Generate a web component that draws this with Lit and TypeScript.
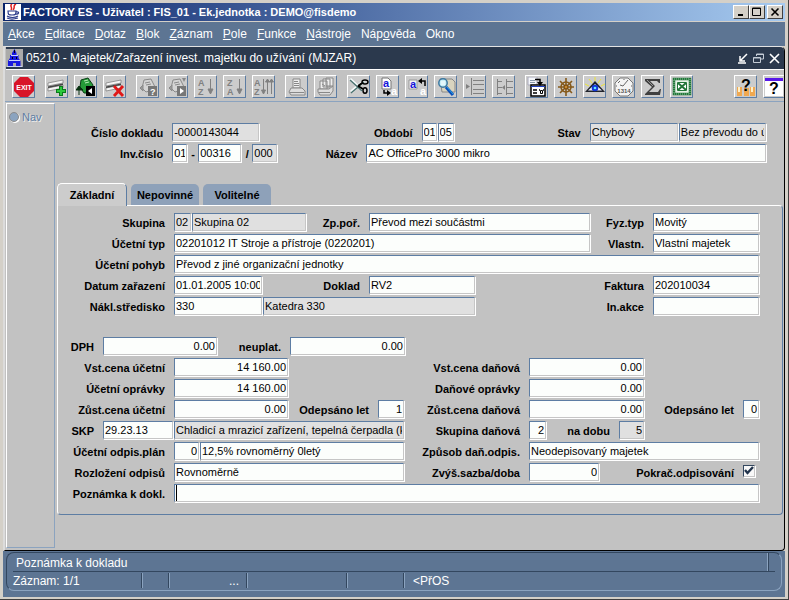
import { LitElement, html, css, svg, nothing, type SVGTemplateResult } from "lit";
import { customElement, property } from "lit/decorators.js";
import { classMap } from "lit/directives/class-map.js";
import { styleMap } from "lit/directives/style-map.js";

interface Cell {
  kind: "label" | "field" | "readonly" | "text" | "check" | "blank";
  w: number;
  text?: string;
  id?: string;
  name?: string;
  right?: boolean;
  caret?: boolean;
}

const label = (w: number, text: string, id: string): Cell => ({ kind: "label", w, text, id });
const field = (w: number, id: string, text = "", name?: string): Cell => ({ kind: "field", w, id, text, name });
const num = (w: number, id: string, text: string, name?: string): Cell => ({ kind: "field", w, id, text, name, right: true });
const ro = (w: number, id: string, text: string, name?: string): Cell => ({ kind: "readonly", w, id, text, name });
const txt = (w: number, text: string): Cell => ({ kind: "text", w, text });
const blank = (w: number): Cell => ({ kind: "blank", w });

const HEADER: Cell[][] = [
  [label(106, "Číslo dokladu", "doc"), ro(88, "doc", "-0000143044"), label(161, "Období", "per"), field(16, "per", "01"),
    field(17, "year", "05", "Rok"), label(135, "Stav", "state"), ro(89, "state", "Chybový"), ro(88, "transfer", "Bez převodu do účetnictví", "Převod")],
  [label(106, "Inv.číslo", "inv"), field(16, "inv", "01"), txt(10, "-"), field(44, "inv2", "00316", "Inv.číslo 2"), txt(10, "/"),
    ro(26, "inv3", "000", "Inv.číslo 3"), label(88, "Název", "title"), field(400, "title", "AC OfficePro 3000 mikro")],
];

const GENERAL: Cell[][] = [
  [label(108, "Skupina", "grp"), ro(18, "grp", "02"), ro(115, "grpname", "Skupina 02", "Název skupiny"), label(62, "Zp.poř.", "acq"),
    field(222, "acq", "Převod mezi součástmi"), label(62, "Fyz.typ", "phys"), field(107, "phys", "Movitý")],
  [label(108, "Účetní typ", "type"), field(417, "type", "02201012 IT Stroje a přístroje (0220201)"), label(62, "Vlastn.", "own"), field(107, "own", "Vlastní majetek")],
  [label(108, "Účetní pohyb", "move"), field(586, "move", "Převod z jiné organizační jednotky")],
  [label(108, "Datum zařazení", "date"), field(89, "date", "01.01.2005 10:00:00"), label(106, "Doklad", "voucher"), field(107, "voucher", "RV2"),
    label(177, "Faktura", "invoice"), field(107, "invoice", "202010034")],
  [label(108, "Nákl.středisko", "cost"), field(89, "cost", "330"), ro(213, "costname", "Katedra 330", "Název střediska"),
    label(177, "In.akce", "action"), field(107, "action")],
];

const VALUES: Cell[][] = [
  [label(37, "DPH", "vat"), num(115, "vat", "0.00"), label(72, "neuplat.", "novat"), num(116, "novat", "0.00"), blank(354)],
  [label(108, "Vst.cena účetní", "in1"), num(115, "in1", "14 160.00"), label(240, "Vst.cena daňová", "in2"), num(116, "in2", "0.00"), blank(115)],
  [label(108, "Účetní oprávky", "dep1"), num(115, "dep1", "14 160.00"), label(240, "Daňové oprávky", "dep2"), num(116, "dep2", "0.00"), blank(115)],
  [label(108, "Zůst.cena účetní", "res1"), num(115, "res1", "0.00"), label(89, "Odepsáno let", "yr1"), num(27, "yr1", "1"),
    label(124, "Zůst.cena daňová", "res2"), num(116, "res2", "0.00"), label(98, "Odepsáno let", "yr2"), num(17, "yr2", "0")],
  [label(37, "SKP", "skp"), field(71, "skp", "29.23.13"), ro(231, "skpname", "Chladicí a mrazicí zařízení, tepelná čerpadla (kromě", "Název SKP"),
    label(124, "Skupina daňová", "tg"), num(18, "tg", "2"), label(72, "na dobu", "term"), { ...ro(26, "term", "5"), right: true }, blank(115)],
  [label(108, "Účetní odpis.plán", "plan"), num(26, "plan", "0"), field(205, "planname", "12,5% rovnoměrný 0letý", "Název plánu"),
    label(124, "Způsob daň.odpis.", "method"), field(231, "method", "Neodepisovaný majetek")],
  [label(108, "Rozložení odpisů", "spread"), field(231, "spread", "Rovnoměrně"), label(124, "Zvýš.sazba/doba", "rate"), num(71, "rate", "0"),
    label(143, "Pokrač.odpisování", "cont"), { kind: "check", w: 17, id: "cont" }],
  [label(108, "Poznámka k dokl.", "note"), { ...field(586, "note"), caret: true }],
];

@customElement("form-rows")
class FormRows extends LitElement {
  @property({ attribute: false }) rows: Cell[][] = [];

  static styles = css`
    :host { display: grid; gap: 2px; }
    .row { display: grid; height: 19px; align-items: stretch; }
    label, .text { font: bold 11px/20px "Liberation Sans", Arial, sans-serif; white-space: nowrap; text-align: right; }
    label { padding-right: 9px; }
    .text { text-align: center; }
    .box {
      box-sizing: border-box; min-width: 0; width: calc(100% - 1px); height: 18px; margin: 0; padding: 0 1px;
      font: 11px/16px "Liberation Sans", Arial, sans-serif; color: #000; background: #fcfefc; border-radius: 0;
      border: 1px solid #c6c6c6; border-top-color: #5d7da3; border-left-color: #5d7da3; box-shadow: 1px 1px 0 #fff; outline: none;
    }
    .readonly { background: #e0e0e0; }
    .right { text-align: right; padding-right: 1px; }
    .caret { background: linear-gradient(#000, #000) 1px 0 / 1px 100% no-repeat #fcfefc; }
    .check {
      appearance: none; width: 12px; height: 12px; margin: 2px 0 0; align-self: start; background: #f8f8f8;
      border: 1px solid #c6c6c6; border-top-color: #33475f; border-left-color: #33475f; box-sizing: border-box; box-shadow: 1px 1px 0 #fff;
    }
    .check:checked {
      background: #f8f8f8 url("data:image/svg+xml,%3Csvg xmlns='http://www.w3.org/2000/svg' viewBox='0 0 10 10'%3E%3Cpath d='M1 4l2.5 3L9 1' fill='none' stroke='%2322344c' stroke-width='2.4'/%3E%3C/svg%3E");
    }
  `;

  private cell(c: Cell) {
    switch (c.kind) {
      case "label": return html`<label for=${c.id!}>${c.text}</label>`;
      case "text": return html`<span class="text">${c.text}</span>`;
      case "blank": return html`<span></span>`;
      case "check": return html`<input class="check" type="checkbox" id=${c.id!} checked />`;
      default: return html`<input
        class=${classMap({ box: true, readonly: c.kind === "readonly", right: !!c.right, caret: !!c.caret })}
        type="text" id=${c.id!} .value=${c.text ?? ""} ?readonly=${c.kind === "readonly"} aria-label=${c.name ?? nothing} />`;
    }
  }

  render() {
    return this.rows.map((r) => html`<div class="row"
      style=${styleMap({ gridTemplateColumns: r.map((c) => `minmax(0, ${c.w}fr)`).join(" ") })}>${r.map((c) => this.cell(c))}</div>`);
  }
}

const sheet = svg`<path d="M1 6l15-3v3L1 9zM1 11l15-3v3L1 14z" fill="#f4f4f4" stroke="#777" stroke-width=".7"/><path d="M1 9.500l15-3v1.500L1 11z" fill="#444"/>`;
const card = svg`<path d="M6 3l7-1 5 10-10 3-4-4z" fill="#d4d4d4" stroke="#8a8a8a"/><path d="M7 6l5-1M8 8l5-1M2 11l3-3v6z" stroke="#8a8a8a" fill="#999"/>`;
const sort = (a: string, b: string) => svg`<g fill="#808080" stroke="#808080"><text x="2" y="9" class="az">${a}</text><text x="2" y="18" class="az">${b}</text><path d="M14.500 2v14" fill="none"/><path d="M12 12h5l-2.500 5z"/></g>`;

const ICONS: Record<string, SVGTemplateResult> = {
  exit: svg`<path d="M6 0h8l6 6v8l-6 6H6l-6-6V6z" fill="#d81428"/><text x="10" y="12.500" text-anchor="middle" class="exit">EXIT</text>`,
  insert: svg`${sheet}<path d="M14 9v10M9 14h10" stroke="#0a7a1c" stroke-width="4"/><path d="M14 10v8M10 14h8" stroke="#2cc83c" stroke-width="2"/>`,
  duplicate: svg`<path d="M5 3l7-2 5 7-2 8H8l-4-6z" fill="#259a38" stroke="#0a4016"/><path d="M8 4l4-1M9 6l4-1" stroke="#b8ecb8"/><path d="M3 18v-7M0 13l3-4 4 4z" fill="#083010" stroke="#083010"/><path d="M10 9h9v10h-9z" fill="#000"/><path d="M16 11v6l-4-3z" fill="#fff"/>`,
  remove: svg`${sheet}<path d="M9 9l9 10M18 9L9 19" stroke="#e01818" stroke-width="2.800"/>`,
  query: svg`${card}<path d="M10 9h9v10h-9z" fill="#777"/><text x="12" y="17.500" class="q">?</text>`,
  execute: svg`${card}<path d="M10 9h9v10h-9z" fill="#777"/><path d="M13 11v6l4-3z" fill="#fff"/><path d="M15 1h4l-2 4z" fill="#888"/>`,
  az: sort("A", "Z"),
  za: sort("Z", "A"),
  sort3: svg`<g fill="#808080" stroke="#808080"><text x="0" y="9" class="az">A</text><text x="0" y="18" class="az">Z</text><path d="M9.500 2v13M13.500 4v13M17.500 4v13" fill="none"/><path d="M7.500 13h4l-2 4zM11.500 5h4l-2-3zM15.500 5h4l-2-3z" /></g>`,
  print: svg`<path d="M6 2h7v9H6z" fill="#eee" stroke="#888"/><path d="M7 4.500h4M7 6.500h5M7 8.500h5" stroke="#888"/><path d="M4 11h11l3 3v4H4l-2-3z" fill="#ddd" stroke="#888"/><path d="M3 15.500h14" stroke="#888"/>`,
  printall: svg`<path d="M10 1h7v8h-7zM7 2h7v8H7zM4 4h7v8H4z" fill="#eee" stroke="#888"/><path d="M6 7l3 2" stroke="#888"/><path d="M2 12h11l4-3v5l-3 4H4l-2-3z" fill="#ddd" stroke="#888"/><path d="M3 15.500h11" stroke="#888"/>`,
  cut: svg`<path d="M1 2l13 12M2 15L15 4" stroke="#f4fafa" stroke-width="3"/><path d="M1 3l12 11M2 16L15 5" stroke="#4b7270" stroke-width="1.500"/><path d="M9 9l4-3M9 9l5 3" stroke="#000" stroke-width="2"/><ellipse cx="16" cy="5" rx="3" ry="2" fill="none" stroke="#000" stroke-width="1.500"/><ellipse cx="16" cy="13.500" rx="2" ry="2.800" fill="none" stroke="#000" stroke-width="1.500"/>`,
  copy: svg`<path d="M4 1h6l3 3v8H4z" fill="#fff" stroke="#777"/><text x="5" y="10" class="a blue">a</text><text x="13" y="18" class="a white">a</text><path d="M6 13v3h5" fill="none" stroke="#000" stroke-width="1.500"/><path d="M9 13l4 3-4 3z"/>`,
  paste: svg`<path d="M2 3h8v9H2z" fill="#f4f4f4" stroke="#999"/><text x="3" y="11" class="a blue">a</text><text x="13" y="18" class="a white">a</text><path d="M18 9V4h-4" fill="none" stroke="#000" stroke-width="1.500"/><path d="M15 1l-4 3 4 3z"/>`,
  find: svg`<path d="M4 2h12l3 3v10H6z" fill="#d9d4bf" stroke="#888"/><circle cx="7" cy="6" r="4.200" fill="#c8eef8" stroke="#3c78a0" stroke-width="1.500"/><path d="M5 5h4M5 7h4" stroke="#fff"/><path d="M10 10l7 8" stroke="#0b50b8" stroke-width="3.200"/><path d="M11 10l6 7" stroke="#2ca4e8"/>`,
  list: svg`<path d="M6.500 1v17M8 3.500h11M8 7.500h11M8 12.500h11M8 16.500h11" stroke="#808080" fill="none"/><path d="M1 7v5l4-2.500z" fill="#808080"/>`,
  tree: svg`<path d="M3.500 2v16M12.500 2v16M3 4.500h5M3 10.500h5M3 16.500h5M13 4.500h6M13 10.500h6M13 16.500h6" stroke="#808080" fill="none"/><path d="M11 8v5l-3-2.500z" fill="#808080"/>`,
  detail: svg`<path d="M1 0h9v8H1z" fill="#f4f6fa" stroke="#aab"/><path d="M3 3.500h5M3 5.500h5" stroke="#89a"/><path d="M4 8h14v11H4z" fill="#fff" stroke="#000" stroke-width="1.500"/><path d="M4 9.500h14" stroke="#2040c0"/><path d="M6 13h4M6 16h4M12 13h1M16 13h1" stroke="#000" stroke-width="1.500"/><path d="M13.500 13.500h2v3h-2z" fill="none" stroke="#000"/><path d="M8 2.500h5v3" fill="none" stroke="#000" stroke-width="1.500"/><path d="M10 5h6l-3 4z"/>`,
  wheel: svg`<g stroke="#85591a" fill="none" stroke-width="1.600"><circle cx="10" cy="10" r="5"/><path d="M10 1v18M2 10h16M4 4l12 12M16 4L4 16"/></g><circle cx="10" cy="10" r="2" fill="#c88a34" stroke="#704408"/>`,
  eye: svg`<path d="M10 0v4M4 2l3 4M16 2l-3 4M0 7l4 2M20 7l-4 2" stroke="#ece434"/><path d="M10 4l10 11H0z" fill="#20242c"/><path d="M3 13.500l7-6.500 7 6.500z" fill="#eef"/><circle cx="10" cy="11" r="3.300" fill="#1238d8"/><circle cx="10" cy="11" r="1.300" fill="#60e8ff"/>`,
  clock: svg`<path d="M6 1h8l5 5v8l-5 5H6l-5-5V6z" fill="#f4f4f4" stroke="#777"/><path d="M6 4l-2 2M14 3l-5 6-3-1M10 2v1M2 9h1M17 9h1" fill="none" stroke="#666"/><text x="10" y="16" text-anchor="middle" class="clock">1314</text>`,
  sum: svg`<path d="M2 2h15v4h-1l-2-2H7l5 5-6 6h9l2-3h1l-1 6H2v-1l7-7-7-6z" fill="#404040"/><path d="M4 3l6 6" stroke="#999"/>`,
  excel: svg`<path d="M2 2h16v15H2z" fill="#e8f4e8" stroke="#23763a" stroke-width="2.500"/><path d="M2 2h16v15H2z" fill="none" stroke="#8cc49a" stroke-dasharray="1 1"/><path d="M5.500 5.500h9v8h-9z" fill="#fff" stroke="#23763a"/><path d="M6 6l8 7M14 6l-8 7" stroke="#23763a" stroke-width="2"/>`,
  who: svg`<path d="M1 10h5v9H1zM8 11h5v8H8zM14 10h5v9h-5z" fill="#f0a850"/><path d="M3 10v5M16 10v5" stroke="#fff0c8" stroke-width="2"/><text x="10" y="14" text-anchor="middle" class="help">?</text>`,
  help: svg`<path d="M1 1h18v18H1z" fill="#fff"/><path d="M1 1h18v3H1z" fill="#5818e8"/><text x="10" y="17" text-anchor="middle" class="help">?</text>`,
};

const TOOLBAR: [string, string][][] = [
  [["exit", "Konec"]],
  [["insert", "Vložit záznam"], ["duplicate", "Duplikovat"], ["remove", "Zrušit záznam"]],
  [["query", "Zadat dotaz"], ["execute", "Provést dotaz"], ["az", "Seřadit vzestupně"], ["za", "Seřadit sestupně"], ["sort3", "Řazení"]],
  [["print", "Tisk"], ["printall", "Tisk sestav"]],
  [["cut", "Vyjmout"], ["copy", "Kopírovat"], ["paste", "Vložit"], ["find", "Hledat"], ["list", "Seznam"], ["tree", "Strom"]],
  [["detail", "Detail"], ["wheel", "Nastavení"], ["eye", "Náhled"], ["clock", "Kalendář"], ["sum", "Součet"], ["excel", "Excel"]],
  [["who", "O aplikaci"], ["help", "Nápověda"]],
];

@customElement("tool-bar")
class ToolBar extends LitElement {
  static styles = css`
    :host { display: flex; gap: 10px; padding: 5px 0 3px 7px; border-bottom: 1px solid #8ba3bf; }
    .group { display: flex; gap: 6px; flex: none; }
    .group:last-child { margin-left: auto; }
    button {
      width: 23px; height: 23px; padding: 0; border: 1px solid; border-color: #fff #5d7da3 #5d7da3 #fff; border-radius: 1px;
      background: #ccc; display: grid; place-items: center; box-sizing: border-box;
    }
    .group:last-child button:last-child { border-right: 0; width: 21px; }
    svg { width: 20px; height: 20px; display: block; }
    text { font-family: "Liberation Sans", Arial, sans-serif; }
    .exit { font-size: 7px; font-weight: bold; fill: #fff; }
    .az { font-size: 9px; font-weight: bold; stroke: none; }
    .q { font-size: 9px; font-weight: bold; fill: #fff; }
    .a { font-size: 11px; font-weight: bold; }
    .blue { fill: #1414d8; }
    .white { fill: #fff; }
    .clock { font-size: 6px; font-weight: bold; fill: #555; }
    .help { font-size: 16px; font-weight: bold; }
  `;

  render() {
    return TOOLBAR.map((g) => html`<div class="group">${g.map(([icon, title]) => html`
      <button title=${title} aria-label=${title}><svg viewBox="0 0 20 20">${ICONS[icon]}</svg></button>`)}</div>`);
  }
}

const MENU: [string, string, string][] = [
  ["", "A", "kce"], ["", "E", "ditace"], ["", "D", "otaz"], ["", "B", "lok"], ["", "Z", "áznam"], ["", "P", "ole"],
  ["", "F", "unkce"], ["", "N", "ástroje"], ["Náp", "o", "věda"], ["Okno", "", ""],
];

@customElement("app-root")
class AppRoot extends LitElement {
  static styles = css`
    :host {
      display: flex; flex-direction: column; box-sizing: border-box; min-height: 100vh; padding: 3px 3px 2px 3px; background: #d4d0c8;
      border-right: 1px solid #404040; border-bottom: 1px solid #404040; font: 12px/16px "Liberation Sans", Arial, sans-serif; color: #000;
    }
    button { font: inherit; color: inherit; background: none; border: 0; padding: 0; margin: 0; }
    .title { display: flex; align-items: center; height: 18px; padding: 0 2px; gap: 2px; background: linear-gradient(90deg, #0a246a, #a6caf0); color: #fff; border-bottom: 1px solid #d4d0c8; }
    .title h1 { flex: 1; margin: 0; font: bold 11px/18px "Liberation Sans", Arial, sans-serif; white-space: nowrap; }
    .java { width: 16px; height: 16px; }
    .winbtns { display: flex; }
    .winbtns button { width: 16px; height: 14px; background: #d4d0c8; box-sizing: border-box; border: 1px solid; border-color: #fff #404040 #404040 #fff; display: grid; place-items: center; }
    .winbtns button:last-child { margin-left: 2px; }
    .winbtns svg { width: 10px; height: 10px; }
    .menu { display: flex; gap: 10px; align-items: center; height: 24px; padding-left: 5px; background: #5d7593; color: #fff; }
    .mdi { flex: 1; display: flex; flex-direction: column; background: #c2c2c2; border: solid; border-width: 1px 1px 1px 2px; border-color: #e4e4e4 #000 #000 #dcdcdc; border-radius: 0 5px 4px 0; overflow: hidden; }
    .caption { display: flex; align-items: center; gap: 3px; height: 22px; margin-left: 1px; background: #2b394d; color: #fff; border-bottom: 1px solid #fff; }
    .caption h2 { flex: 1; margin: 0; font: 12px/22px "Liberation Sans", Arial, sans-serif; white-space: nowrap; }
    .logo { width: 17px; height: 18px; }
    .mdibtns { display: flex; gap: 5px; padding-right: 4px; }
    .mdibtns svg { width: 11px; height: 11px; display: block; }
    .work { flex: 1; display: flex; gap: 1px; padding: 1px 1px 2px 1px; }
    .nav { width: 49px; flex: none; border: 1px solid; border-color: #fff #8ba3bf #8ba3bf #fff; color: #5d7da3; box-sizing: border-box; }
    .nav label { display: flex; align-items: center; gap: 3px; padding: 5px 0 0 2px; font-size: 11px; text-shadow: 1px 1px 0 #eee; }
    .nav input { appearance: none; width: 10px; height: 10px; margin: 0; border-radius: 50%; background: #8ba3bf; border: 1px solid #8a8a8a; box-shadow: 1px 1px 0 #fff; }
    .page { flex: 1; min-width: 0; padding: 20px 0 0 1px; }
    .head { margin: 0 16px 0 9px; }
    .tabs { display: flex; gap: 4px; margin-top: 20px; align-items: flex-end; }
    .tabs button { flex: none; width: 68px; height: 21px; background: #8ea1b9; border-radius: 5px 5px 0 0; font: bold 11px/22px "Liberation Sans", Arial, sans-serif; }
    .tabs button.on { width: 70px; height: 23px; margin-bottom: -1px; background: #ccc; border: 1px solid; border-color: #fff #5d7da3 transparent #fff; border-bottom: 0; z-index: 1; }
    .panel { display: grid; gap: 21px; padding: 7px 22px 11px 8px; border: 1px solid; border-color: #fff #5d7da3 #5d7da3 #fff; border-radius: 0 4px 4px 4px; }
    .foot { background: #5d7593; color: #fff; padding: 1px 3px 6px 3px; }
    .status { border: 1px solid; border-color: #33475f #8ba3bf #8ba3bf #33475f; border-radius: 8px; padding: 0 6px; white-space: nowrap; overflow: hidden; }
    .hint { display: flex; height: 18px; line-height: 20px; padding-left: 3px; border-bottom: 1px solid #33475f; justify-content: space-between; }
    .hint i { width: 2px; margin-right: 6px; border-left: 1px solid #8ba3bf; border-right: 1px solid #33475f; box-sizing: border-box; }
    .cells { display: flex; height: 18px; line-height: 16px; padding-top: 1px; box-sizing: border-box; }
    .cells span { box-sizing: border-box; height: 15px; border-right: 1px solid #33475f; box-shadow: 1px 0 0 #8ba3bf; }
    .c1 { width: 129px; }
    .c2 { width: 27px; }
    .c3 { width: 78px; text-align: right; padding-right: 7px; }
    .c4 { width: 100px; }
    .c5 { width: 57px; }
    .cells b { font-weight: normal; padding-left: 9px; }
  `;

  render() {
    return html`
      <header class="title">
        <svg class="java" viewBox="0 0 16 16"><path d="M0 0h16v16H0z" fill="#fff"/><path d="M7 0C4 2 8 3 6 6M11 0C7 2 11 3 8 6" fill="none" stroke="#e02020" stroke-width="1.500"/><path d="M3 7h8c0 4-1 4-4 4S3 11 3 7zM11 8c4-1 3 3-1 2M2 12c3 2 8 2 11 0M2 14c4 2 8 1 11 0" fill="none" stroke="#283888" stroke-width="1.200"/></svg>
        <h1>FACTORY ES - Uživatel : FIS_01 - Ek.jednotka : DEMO@fisdemo</h1>
        <div class="winbtns">
          <button aria-label="Minimalizovat"><svg viewBox="0 0 10 10"><path d="M2 8h5" stroke="#000" stroke-width="2"/></svg></button>
          <button aria-label="Maximalizovat"><svg viewBox="0 0 10 10"><path d="M.5 1h8v7.500h-8zM.5 1.500h8" fill="none" stroke="#000"/></svg></button>
          <button aria-label="Zavřít"><svg viewBox="0 0 10 10"><path d="M1.500 1.500l7 7M8.500 1.500l-7 7" stroke="#000" stroke-width="1.600"/></svg></button>
        </div>
      </header>
      <nav class="menu">${MENU.map(([a, u, b]) => html`<button>${a}<u>${u}</u>${b}</button>`)}</nav>
      <main class="mdi">
        <div class="caption">
          <svg class="logo" viewBox="0 0 17 18"><path d="M0 0h17v18H0z" fill="#aaa"/><path d="M8.500 0l2 4v2h2v3l2 3v5H10v-3H7v3H2v-5l2-3V6h2V4z" fill="#1818e0"/><path d="M5 6.500h7M3 11.500h11M1 17.500h15" stroke="#c8d0ff"/><path d="M8 1h1v3H8zM6 8h1v2H6zM10 8h1v2h-1z" fill="#001"/></svg>
          <h2>05210 - Majetek/Zařazení invest. majetku do užívání (MJZAR)</h2>
          <div class="mdibtns">
            <button aria-label="Minimalizovat okno"><svg viewBox="0 0 11 11"><path d="M1 10h8M10 1L4 7M3 3v5h5" fill="none" stroke="#fff" stroke-width="1.500"/></svg></button>
            <button aria-label="Obnovit okno"><svg viewBox="0 0 11 11"><path d="M3.500 3V1h7v5H8M.5 4.500h7v5h-7zM.5 5h7M3.500 1.500h7" fill="none" stroke="#c4ccd6"/></svg></button>
            <button aria-label="Zavřít okno"><svg viewBox="0 0 11 11"><path d="M1 1l9 9M10 1l-9 9" stroke="#fff" stroke-width="1.600"/></svg></button>
          </div>
        </div>
        <tool-bar></tool-bar>
        <div class="work">
          <aside class="nav"><label><input type="radio" name="nav" />Nav</label></aside>
          <section class="page">
            <form-rows class="head" .rows=${HEADER}></form-rows>
            <div class="tabs" role="tablist">
              <button class="on" role="tab" aria-selected="true">Základní</button>
              <button role="tab">Nepovinné</button>
              <button role="tab">Volitelné</button>
            </div>
            <div class="panel">
              <form-rows .rows=${GENERAL}></form-rows>
              <form-rows .rows=${VALUES}></form-rows>
            </div>
          </section>
        </div>
      </main>
      <footer class="foot">
        <div class="status">
          <div class="hint">Poznámka k dokladu<i></i></div>
          <div class="cells"><span class="c1">Záznam: 1/1</span><span class="c2"></span><span class="c3">...</span><span class="c4"></span><span class="c5"></span><b>&lt;PřOS</b></div>
        </div>
      </footer>`;
  }
}
